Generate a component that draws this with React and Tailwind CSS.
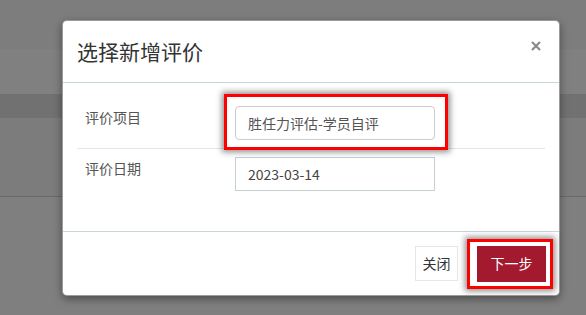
import React from 'react';

const font = { fontFamily: '"Noto Sans CJK SC", "Noto Sans", sans-serif' };

const FormRow = ({ label, children, last }) => (
  <div className={`flex py-2 pl-2 ${last ? '' : 'border-b border-[#e5e5e5]'}`}>
    <div className="w-[150px] shrink-0 pt-[1px] text-[14px] leading-[20px] text-[#555]">{label}</div>
    {children}
  </div>
);

const Highlight = ({ className }) => (
  <div
    className={`pointer-events-none absolute border-[3px] border-[#ff0000] shadow-[0_0_6px_2px_rgba(0,0,0,0.45)] ${className}`}
  />
);

export default function App() {
  return (
    <div className="relative h-[315px] w-[586px] overflow-hidden bg-[#7f7f7f]" style={font}>
      {/* page behind the overlay */}
      <div className="h-[49px] bg-[#7d7d7d]" />
      <div className="h-[45px] bg-[#808080]" />
      <div className="h-[24px] bg-[#707170]" />
      <div className="h-[79px] border-b border-[#6a6a6a] bg-[#7c7c7c]" />

      {/* modal */}
      <div className="absolute left-[62px] top-[20px] w-[498px] rounded-[5px] border border-[#5a5a5a]/60 bg-white shadow-[0_3px_9px_rgba(0,0,0,0.4)]">
        <div className="flex h-[62px] items-center justify-between border-b border-[#c9d5dc] pl-[14px] pr-[18px]">
          <h4 className="text-[21px] font-normal text-[#333]">选择新增评价</h4>
          <svg width="10" height="10" viewBox="0 0 10 10" className="-mt-[12px]">
            <path d="M1 1L9 9M9 1L1 9" stroke="#8a8a8a" strokeWidth="2.2" />
          </svg>
        </div>

        <div className="h-[148px] px-[14px] pt-[15px]">
          <FormRow label="评价项目">
            <div className="relative">
              <div className="flex h-[34px] w-[200px] items-center rounded-[4px] border border-[#ccc] px-3 text-[14px] text-[#555]">
                胜任力评估-学员自评
              </div>
              <Highlight className="-left-[11px] -right-[13px] -top-[12px] -bottom-[10px]" />
            </div>
          </FormRow>
          <FormRow label="评价日期" last>
            <div className="flex h-[34px] w-[200px] items-center border border-[#c5cfd6] px-3 text-[14px] text-[#444]">
              2023-03-14
            </div>
          </FormRow>
        </div>

        <div className="flex h-[64px] items-center justify-end gap-[19px] border-t border-[#c9d5dc] pr-[13px]">
          <button className="h-[35px] w-[43px] border border-[#e6e6e6] bg-white text-[14px] text-[#333]">
            关闭
          </button>
          <div className="relative">
            <button className="h-[36px] w-[69px] bg-[#a31a2f] text-[14px] text-white">下一步</button>
            <Highlight className="-left-[10px] -right-[7px] -top-[7px] -bottom-[7px]" />
          </div>
        </div>
      </div>
    </div>
  );
}
